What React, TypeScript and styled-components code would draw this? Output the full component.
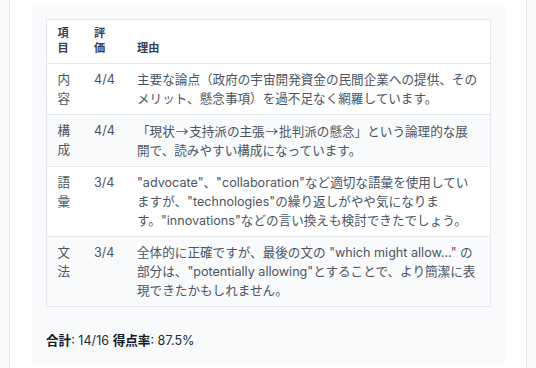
import React from 'react';
import styled, { createGlobalStyle } from 'styled-components';

const GlobalStyle = createGlobalStyle`
  html, body {
    margin: 0;
    padding: 0;
    background: #f9fafb;
  }
  body {
    font-family: Inter, "Noto Sans CJK JP", sans-serif;
  }
`;

interface ScoreRow {
  item: string;
  score: string;
  reason: React.ReactNode;
}

// full-width arrow as drawn in the CJK text
const Arrow = styled.span`
  font-family: "Noto Sans CJK JP", sans-serif;
  font-feature-settings: "fwid";
  padding: 0 0.07em;
`;

const rows: ScoreRow[] = [
  {
    item: '内容',
    score: '4/4',
    reason: '主要な論点（政府の宇宙開発資金の民間企業への提供、そのメリット、懸念事項）を過不足なく網羅しています。',
  },
  {
    item: '構成',
    score: '4/4',
    reason: (
      <>
        「現状<Arrow>→</Arrow>支持派の主張<Arrow>→</Arrow>批判派の懸念」という論理的な展開で、読みやすい構成になっています。
      </>
    ),
  },
  {
    item: '語彙',
    score: '3/4',
    reason: '"advocate"、"collaboration"など適切な語彙を使用していますが、"technologies"の繰り返しがやや気になります。"innovations"などの言い換えも検討できたでしょう。',
  },
  {
    item: '文法',
    score: '3/4',
    reason: '全体的に正確ですが、最後の文の "which might allow..." の部分は、"potentially allowing"とすることで、より簡潔に表現できたかもしれません。',
  },
];

export default function App() {
  return (
    <>
      <GlobalStyle />
      <Page>
        <Card>
          <Panel>
            <Table>
              <colgroup>
                <col style={{ width: 37 }} />
                <col style={{ width: 43 }} />
                <col />
              </colgroup>
              <thead>
                <tr>
                  <HeadCell>項目</HeadCell>
                  <HeadCell>評価</HeadCell>
                  <HeadCell>理由</HeadCell>
                </tr>
              </thead>
              <tbody>
                {rows.map((r, i) => (
                  <Row key={r.item} $striped={i % 2 === 1}>
                    <Cell>{r.item}</Cell>
                    <Cell>{r.score}</Cell>
                    <Cell>{r.reason}</Cell>
                  </Row>
                ))}
              </tbody>
            </Table>
            <Summary>
              <strong>合計</strong>: 14/16 <strong>得点率</strong>: 87.5%
            </Summary>
          </Panel>
        </Card>
      </Page>
    </>
  );
}

const Page = styled.div`
  padding: 0 9px;
  min-height: 100vh;
  box-sizing: border-box;
`;

const Card = styled.div`
  background: #ffffff;
  border-left: 1px solid #e5e7eb;
  border-right: 1px solid #e5e7eb;
  padding: 5px 21px 6px 22px;
  min-height: 100vh;
  box-sizing: border-box;
`;

const Panel = styled.div`
  background: #f9fafb;
  padding: 14px;
`;

const Table = styled.table`
  width: 100%;
  table-layout: fixed;
  border-collapse: collapse;
  border: 1px solid #e5e7eb;
  font-size: 12.6px;
  line-height: 19px;
  color: #4b5563;
`;

const HeadCell = styled.th`
  text-align: left;
  vertical-align: bottom;
  font-size: 11.2px;
  line-height: 15px;
  font-weight: 600;
  color: #374151;
  background: #ffffff;
  padding: 6px 11px 7px 10.5px;
  border-bottom: 1px solid #e5e7eb;
`;

const Row = styled.tr<{ $striped: boolean }>`
  background: ${(p) => (p.$striped ? '#f9fafb' : '#ffffff')};
  border-top: 1px solid #e5e7eb;
`;

const Cell = styled.td`
  vertical-align: top;
  padding: 6px 11px 6px 10.5px;
`;

const Summary = styled.p`
  margin: 24px 0 0;
  font-size: 12.6px;
  line-height: 19px;
  color: #1f2937;

  strong {
    font-weight: 700;
    color: #111827;
  }
`;
